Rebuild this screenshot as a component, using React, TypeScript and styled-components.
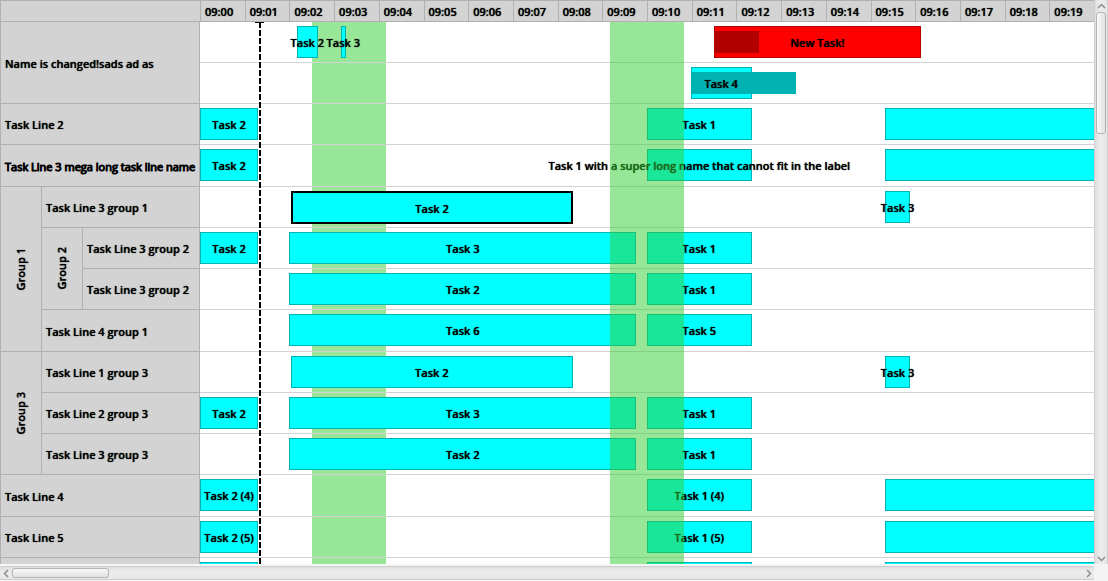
import React from "react";
import styled, { createGlobalStyle, css } from "styled-components";

const SPAN = 20;
const pct = (minutes: number) => `${(minutes / SPAN) * 100}%`;

const GlobalStyle = createGlobalStyle`
  * { box-sizing: border-box; }
  html, body, #root { height: 100%; }
  body {
    margin: 0;
    background: #f4f4f4;
    color: #000;
    font-family: "Open Sans", "Noto Sans", sans-serif;
    font-size: 12px;
    line-height: 16px;
    overflow: hidden;
  }
`;

const rows = css`
  grid-template-rows: repeat(4, 41px 41px 41px 42px);
`;

const label = css`
  font-size: 11px;
  font-weight: 600;
  text-shadow: 0 0 1px #000;
  white-space: nowrap;
`;

const Page = styled.main`
  height: 100%;
  display: grid;
  grid-template-columns: minmax(0, 1fr) 14px;
  grid-template-rows: minmax(0, 1fr) 17px;
`;

const Chart = styled.section`
  display: grid;
  grid-template-columns: 200px minmax(0, 1fr);
  grid-template-rows: 22px minmax(0, 1fr);
  overflow: hidden;
  background: #fff;
`;

const Corner = styled.div`
  background: #d3d3d3;
  border: 1px solid #b0b0b0;
  border-right: 0;
`;

const TimeAxis = styled.header`
  display: flex;
  background: #d3d3d3;
  border-top: 1px solid #b0b0b0;
  border-bottom: 1px solid #b0b0b0;
`;

const Tick = styled.time`
  ${label}
  flex: 1 1 0;
  min-width: 0;
  padding: 3px 0 0 4px;
  border-left: 1px solid #b0b0b0;
`;

const Names = styled.div`
  display: grid;
  grid-template-columns: 41px 41px minmax(0, 1fr);
  ${rows}
  overflow: hidden;
  background: #d3d3d3;
  border-left: 1px solid #b0b0b0;
  border-right: 1px solid #b0b0b0;
`;

const NameCell = styled.div<{ $row: number; $rows?: number; $level?: number; $narrow?: boolean }>`
  ${label}
  ${(p) =>
    p.$narrow &&
    css`
      font-weight: 400;
      text-shadow: none;
      -webkit-text-stroke: 1px #000;
    `}
  grid-row: ${(p) => p.$row} / span ${(p) => p.$rows ?? 1};
  grid-column: ${(p) => (p.$level ?? 0) + 1} / 4;
  display: flex;
  align-items: center;
  padding: 2px 0 0 4px;
  border-bottom: 1px solid #b0b0b0;
`;

const GroupCell = styled.div<{ $row: number; $rows: number; $level: number }>`
  ${label}
  grid-row: ${(p) => p.$row} / span ${(p) => p.$rows};
  grid-column: ${(p) => p.$level + 1};
  display: flex;
  align-items: center;
  justify-content: center;
  border-right: 1px solid #b0b0b0;
  border-bottom: 1px solid #b0b0b0;
  span {
    writing-mode: vertical-rl;
    transform: rotate(180deg);
  }
`;

const Timeline = styled.div`
  position: relative;
  overflow: hidden;
`;

const Lanes = styled.div`
  position: relative;
  display: grid;
  ${rows}
`;

const Lane = styled.div`
  position: relative;
  border-bottom: 1px solid #d3d3d3;
`;

const TaskBar = styled.div<{ $color: string; $edge: string; $selected?: boolean }>`
  ${label}
  position: absolute;
  top: 4px;
  height: ${(p) => (p.$selected ? "33px" : "32px")};
  display: flex;
  align-items: center;
  justify-content: center;
  padding-top: 2px;
  background: ${(p) => p.$color};
  border: ${(p) => (p.$selected ? "2px solid #000" : `1px solid ${p.$edge}`)};
`;

const Progress = styled.div<{ $color: string }>`
  position: absolute;
  left: 0;
  top: 4px;
  height: 22px;
  background: ${(p) => p.$color};
`;

const TaskLabel = styled.span`
  position: relative;
  flex: none;
`;

const Highlight = styled.div`
  position: absolute;
  top: 0;
  bottom: 0;
  background: rgba(50, 205, 50, 0.5);
`;

const NowMarker = styled.svg`
  position: absolute;
  top: 0;
  width: 10px;
  height: 100%;
`;

const Scroll = styled.div<{ $vertical?: boolean }>`
  display: flex;
  flex-direction: ${(p) => (p.$vertical ? "column" : "row")};
  align-items: center;
  margin: ${(p) => (p.$vertical ? "0" : "2px 0 1px")};
  background: linear-gradient(${(p) => (p.$vertical ? "to right" : "to bottom")}, #dedede, #ececec 40%, #e6e6e6);
  border: 0 solid #cfcfcf;
  border-width: ${(p) => (p.$vertical ? "0 1px" : "1px 0")};
`;

const Arrow = styled.button`
  flex: none;
  display: grid;
  place-items: center;
  width: 12px;
  height: 12px;
  padding: 0;
  border: 0;
  background: none;
`;

const Thumb = styled.div<{ $vertical?: boolean }>`
  width: ${(p) => (p.$vertical ? "10px" : "97px")};
  height: ${(p) => (p.$vertical ? "122px" : "10px")};
  border: 1px solid #b4b4b4;
  border-radius: 3px;
  background: linear-gradient(${(p) => (p.$vertical ? "to right" : "to bottom")}, #fafafa, #e0e0e0);
`;

const Spacer = styled.div`
  flex: 1;
`;

type Task = {
  name: string;
  from: number;
  to: number;
  progress?: number;
  red?: boolean;
  selected?: boolean;
};

const task = (name: string, from: number, to: number, extra: Partial<Task> = {}): Task => ({ name, from, to, ...extra });

const first = (name = "Task 2") => task(name, 0, 1.3);
const middle = (name: string) => task(name, 2, 9.76);
const late = (name = "Task 1") => task(name, 10, 12.34);
const tail = () => task("", 15.33, 26);

const lanes: Task[][] = [
  [task("Task 2", 2.16, 2.64), task("Task 3", 3.15, 3.26), task("New Task!", 11.49, 16.14, { red: true, progress: 1 })],
  [task("Task 4", 10.98, 12.34, { progress: 2.4 })],
  [first(), late(), tail()],
  [first(), late("Task 1 with a super long name that cannot fit in the label"), tail()],
  [task("Task 2", 2.03, 8.35, { selected: true }), task("Task 3", 15.33, 15.88)],
  [first(), middle("Task 3"), late()],
  [middle("Task 2"), late()],
  [middle("Task 6"), late("Task 5")],
  [task("Task 2", 2.03, 8.34), task("Task 3", 15.33, 15.88)],
  [first(), middle("Task 3"), late()],
  [middle("Task 2"), late()],
  [first("Task 2 (4)"), late("Task 1 (4)"), tail()],
  [first("Task 2 (5)"), late("Task 1 (5)"), tail()],
  [first(""), late(""), tail()],
];

const names = [
  { text: "Name is changed!sads ad as", row: 1, rows: 2 },
  { text: "Task Line 2", row: 3 },
  { text: "Task Line 3 mega long task line name", row: 4, narrow: true },
  { text: "Task Line 3 group 1", row: 5, level: 1 },
  { text: "Task Line 3 group 2", row: 6, level: 2 },
  { text: "Task Line 3 group 2", row: 7, level: 2 },
  { text: "Task Line 4 group 1", row: 8, level: 1 },
  { text: "Task Line 1 group 3", row: 9, level: 1 },
  { text: "Task Line 2 group 3", row: 10, level: 1 },
  { text: "Task Line 3 group 3", row: 11, level: 1 },
  { text: "Task Line 4", row: 12 },
  { text: "Task Line 5", row: 13 },
  { text: "", row: 14 },
];

const groups = [
  { text: "Group 1", row: 5, rows: 4, level: 0 },
  { text: "Group 2", row: 6, rows: 2, level: 1 },
  { text: "Group 3", row: 9, rows: 3, level: 0 },
];

const chevrons = {
  up: "M1 6 L4.5 2.5 L8 6",
  down: "M1 3 L4.5 6.5 L8 3",
  left: "M6 1 L2.5 4.5 L6 8",
  right: "M3 1 L6.5 4.5 L3 8",
};

const ScrollArrow = ({ to }: { to: keyof typeof chevrons }) => (
  <Arrow type="button" aria-label={`Scroll ${to}`}>
    <svg width="9" height="9" fill="none" stroke="#8c8c8c" strokeWidth="1.5">
      <path d={chevrons[to]} />
    </svg>
  </Arrow>
);

const Bar = ({ item }: { item: Task }) => (
  <TaskBar
    $color={item.red ? "#ff0000" : "#00ffff"}
    $edge={item.red ? "#b20000" : "#00b2b2"}
    $selected={item.selected}
    style={{ left: pct(item.from), width: pct(item.to - item.from) }}
  >
    {item.progress && (
      <Progress
        $color={item.red ? "#b20000" : "#00b2b2"}
        style={{ width: `${(item.progress / (item.to - item.from)) * 100}%` }}
      />
    )}
    <TaskLabel>{item.name}</TaskLabel>
  </TaskBar>
);

export default function App() {
  return (
    <>
      <GlobalStyle />
      <Page>
        <Chart>
          <Corner />
          <TimeAxis>
            {Array.from({ length: SPAN }, (_, i) => (
              <Tick key={i}>{`09:${String(i).padStart(2, "0")}`}</Tick>
            ))}
          </TimeAxis>
          <Names>
            {groups.map((g) => (
              <GroupCell key={g.text} $row={g.row} $rows={g.rows} $level={g.level}>
                <span>{g.text}</span>
              </GroupCell>
            ))}
            {names.map((n) => (
              <NameCell key={n.row} $row={n.row} $rows={n.rows} $level={n.level} $narrow={n.narrow}>
                {n.text}
              </NameCell>
            ))}
          </Names>
          <Timeline>
            <Highlight style={{ left: pct(2.51), width: pct(1.65) }} />
            <Lanes>
              {lanes.map((items, i) => (
                <Lane key={i}>
                  {items.map((item, j) => (
                    <Bar key={j} item={item} />
                  ))}
                </Lane>
              ))}
            </Lanes>
            <Highlight style={{ left: pct(9.17), width: pct(1.65) }} />
            <NowMarker style={{ left: pct(1.23) }}>
              <line x1="0" y1="0.5" x2="9" y2="0.5" stroke="#000" />
              <line x1="5" y1="0" x2="5" y2="100%" stroke="#000" strokeWidth="2" strokeDasharray="6 2" />
            </NowMarker>
          </Timeline>
        </Chart>
        <Scroll $vertical>
          <ScrollArrow to="up" />
          <Thumb $vertical />
          <Spacer />
          <ScrollArrow to="down" />
        </Scroll>
        <Scroll>
          <ScrollArrow to="left" />
          <Thumb />
          <Spacer />
          <ScrollArrow to="right" />
        </Scroll>
      </Page>
    </>
  );
}
